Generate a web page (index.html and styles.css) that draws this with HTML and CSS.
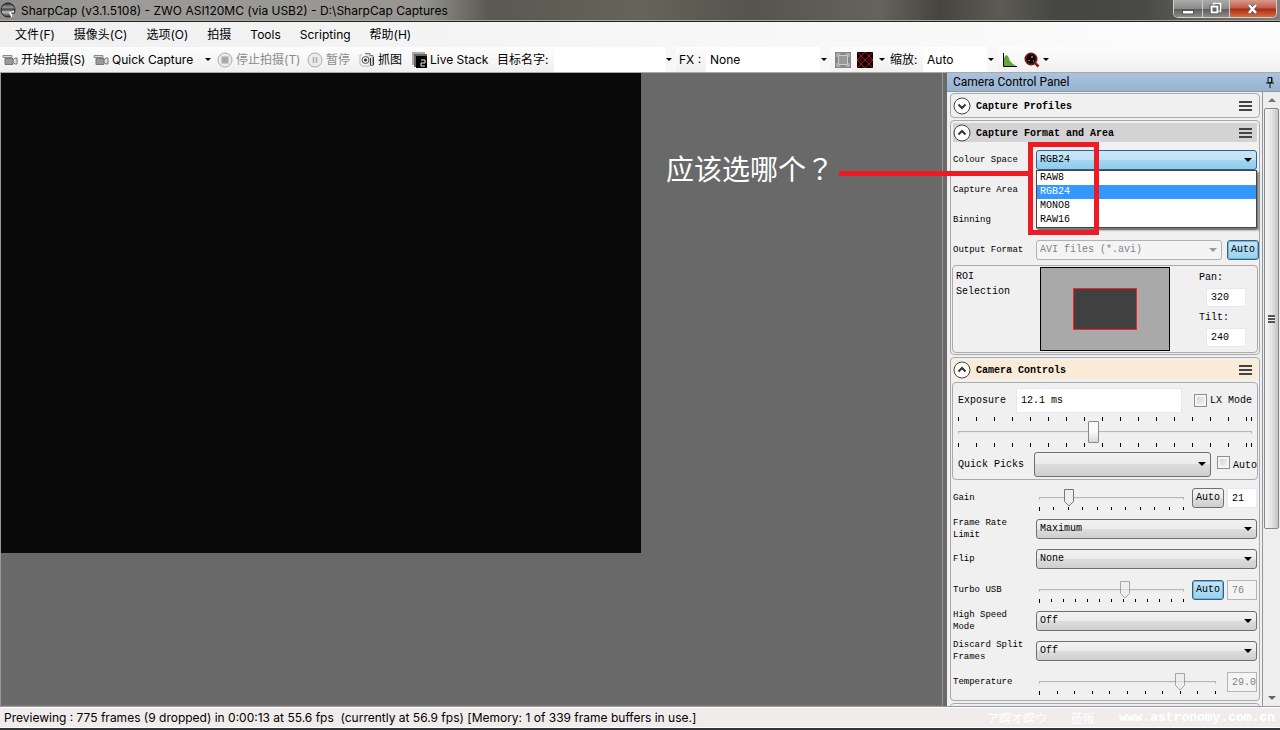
FILE: index.html
```html
<!DOCTYPE html>
<html lang="zh-CN">
<head>
<meta charset="utf-8">
<title>SharpCap</title>
<link rel="stylesheet" href="styles.css">
</head>
<body>
<div class="window">
  <header class="titlebar">
    <svg class="app-icon" width="16" height="16" viewBox="0 0 16 16"><defs><linearGradient id="ball" x1="0" y1="0" x2="0" y2="1"><stop offset="0" stop-color="#222"/><stop offset=".3" stop-color="#999"/><stop offset=".45" stop-color="#444"/><stop offset=".65" stop-color="#bbb"/><stop offset="1" stop-color="#333"/></linearGradient></defs><circle cx="8" cy="8" r="7" fill="url(#ball)" stroke="#222"/><path d="M9 10l5-1v6h-3z" fill="#fff"/><path d="M11 11h3M13 11v4" stroke="#333"/></svg>
    <h1 class="title">SharpCap (v3.1.5108) - ZWO ASI120MC (via USB2) - D:\SharpCap Captures</h1>
    <div class="caption">
      <button class="cap min" aria-label="Minimize"><svg width="12" height="14" viewBox="0 0 12 14"><rect x=".5" y="8.500" width="11" height="3.500" fill="#fff" stroke="#555"/></svg></button>
      <button class="cap max" aria-label="Restore"><svg width="14" height="14" viewBox="0 0 14 14"><path d="M4.500 1.500h7v8h-7z" fill="#777" stroke="#fff" stroke-width="1.500"/><path d="M2.500 4.500h6v6h-6z" fill="#666" stroke="#fff" stroke-width="2"/><path d="M1 3h9v9h-9z" fill="none" stroke="#445" stroke-width=".6"/></svg></button>
      <button class="cap close" aria-label="Close"><svg width="14" height="14" viewBox="0 0 14 14"><path d="M3 3l7 8M10 3l-7 8" stroke="#556" stroke-width="4"/><path d="M3 3l7 8M10 3l-7 8" stroke="#fff" stroke-width="2.500"/></svg></button>
    </div>
  </header>
  <nav class="menu">
    <button>文件(F)</button><button>摄像头(C)</button><button>选项(O)</button><button>拍摄</button><button>Tools</button><button>Scripting</button><button>帮助(H)</button>
  </nav>
  <div class="toolbar">
    <button class="tool w91"><svg width="16" height="16" viewBox="0 0 16 16"><path d="M1 3.500h9v2H1z" fill="#ddd" stroke="#888"/><path d="M3 6.500h8v6H3z" fill="#999" stroke="#777"/><path d="M11 8l2-2h2v6h-2l-2-2z" fill="#ddd" stroke="#777"/></svg>开始拍摄(S)</button>
    <button class="tool w124"><svg width="16" height="16" viewBox="0 0 16 16"><path d="M1 3.500h9v2H1z" fill="#ddd" stroke="#888"/><path d="M3 6.500h8v6H3z" fill="#999" stroke="#777"/><path d="M11 8l2-2h2v6h-2l-2-2z" fill="#ddd" stroke="#777"/></svg>Quick Capture<i class="arrow end"></i></button>
    <button class="tool w90" disabled><svg width="16" height="16" viewBox="0 0 16 16"><circle cx="8" cy="8" r="7" fill="#ececec" stroke="#aaa"/><path d="M4.500 4.500h7v7h-7z" fill="#aaa"/></svg>停止拍摄(T)</button>
    <button class="tool w52" disabled><svg width="16" height="16" viewBox="0 0 16 16"><circle cx="8" cy="8" r="7" fill="#ececec" stroke="#aaa"/><path d="M6.500 5v6M9.500 5v6" stroke="#aaa" stroke-width="1.500"/></svg>暂停</button>
    <button class="tool w53"><svg width="16" height="16" viewBox="0 0 16 16"><path d="M1 3h2M1 3v9l2 2h8" fill="none" stroke="#bbb"/><path d="M6 1.500h5v2h3v10h-3" fill="#ddd" stroke="#777"/><circle cx="6.500" cy="8" r="3.500" fill="#eee" stroke="#555"/><circle cx="6.500" cy="8" r="1.500" fill="#333"/><path d="M11.500 6v7M14.500 5v8" stroke="#333"/></svg>抓图</button>
    <button class="tool w85 stack"><svg width="16" height="16" viewBox="0 0 16 16"><path d="M0 0h13v13H0z" fill="#aaa"/><path d="M2 2h13v13H2z" fill="#666"/><path d="M4 4h11v12H4z" fill="#000"/><path d="M9 8h4v3h-4v3h4" fill="none" stroke="#eee"/></svg>Live Stack</button>
    <label class="lab w57" for="target">目标名字:</label>
    <select id="target" class="flat w122"><option></option></select>
    <label class="lab w27" for="fx">FX :</label>
    <select id="fx" class="flat w125"><option>None</option></select>
    <button class="tool w22" aria-label="Selection area"><svg width="16" height="16" viewBox="0 0 16 16"><path d="M0 0h16v16H0z" fill="#888"/><path d="M3.500 3.500h9v9h-9z" fill="#999" stroke="#ccc"/><path d="M2 5V2h3M11 2h3v3M14 11v3h-3M5 14H2v-3" stroke="#ccc" fill="none"/></svg></button>
    <button class="tool w33" aria-label="Reticule"><svg width="16" height="16" viewBox="0 0 16 16"><path d="M0 0h16v16H0z"/><path d="M0 0l16 16M16 0L0 16M8 0l8 8-8 8-8-8zM0 8h5M11 8h5" stroke="#c00" fill="none"/></svg><i class="arrow"></i></button>
    <label class="lab w33" for="zoom">缩放:</label>
    <select id="zoom" class="flat w75"><option>Auto</option></select>
    <button class="tool w22" aria-label="Histogram"><svg width="16" height="16" viewBox="0 0 16 16"><path d="M1 14V7l3-4 2 1 2 5 3 3 3 2z" fill="#64a63c"/><path d="M1.500 1v13.500H15" fill="none" stroke="#000"/></svg></button>
    <button class="tool w33 focus" aria-label="Focus"><svg width="16" height="16" viewBox="0 0 16 16"><circle cx="7" cy="7" r="5.500" fill="#000" stroke="#701414" stroke-width="2"/><path d="M10.500 10.500l4 4" stroke="#8b1a1a" stroke-width="2.500"/><path d="M8 4v2M5 8v1M9 9h1" stroke="#ddd"/></svg><i class="arrow"></i></button>
  </div>

  <main class="work">
    <section class="viewport" aria-label="Preview"><div class="frame"></div></section>
    <aside class="panel">
      <header class="panel-head"><h2>Camera Control Panel</h2><svg width="10" height="12" viewBox="0 0 10 12"><path d="M3 1.500h4v5H3zM1 7h8M5 7v5" fill="none" stroke="#111"/><path d="M6.500 1v6" stroke="#111"/></svg></header>
      <div class="panel-body">
        <div class="groups">
          <section class="group">
            <div class="ghead"><svg width="18" height="18" viewBox="0 0 18 18"><circle cx="9" cy="9" r="8" fill="#fff" stroke="#444"/><path d="M5.500 7.500L9 11l3.500-3.500" fill="none" stroke="#333" stroke-width="2"/></svg><h3>Capture Profiles</h3><button class="burger" aria-label="Menu"></button></div>
          </section>
          <section class="group format">
            <div class="ghead gray"><svg width="18" height="18" viewBox="0 0 18 18"><circle cx="9" cy="9" r="8" fill="#fff" stroke="#444"/><path d="M5.500 10.500L9 7l3.500 3.500" fill="none" stroke="#333" stroke-width="2"/></svg><h3>Capture Format and Area</h3><button class="burger" aria-label="Menu"></button></div>
            <div class="row"><label for="space">Colour Space</label>
              <div class="combo"><select id="space" class="open"><option>RGB24</option></select>
                <ul class="list" role="listbox"><li role="option">RAW8</li><li role="option" class="sel" aria-selected="true">RGB24</li><li role="option">MONO8</li><li role="option">RAW16</li></ul></div></div>
            <div class="row"><label for="area">Capture Area</label><select id="area"><option></option></select></div>
            <div class="row"><label for="bin">Binning</label><select id="bin"><option></option></select></div>
            <div class="row fmt"><label for="fmt">Output Format</label><select id="fmt" disabled><option>AVI files (*.avi)</option></select><button class="auto on">Auto</button></div>
            <div class="box roi">
              <span class="roi-label">ROI<br>Selection</span>
              <div class="roi-map"><div class="roi-area"></div></div>
              <div class="roi-vals"><label for="pan">Pan:</label><input id="pan" value="320"><label for="tilt">Tilt:</label><input id="tilt" value="240"></div>
            </div>
          </section>
          <section class="group">
            <div class="ghead cream"><svg width="18" height="18" viewBox="0 0 18 18"><circle cx="9" cy="9" r="8" fill="#fff" stroke="#444"/><path d="M5.500 10.500L9 7l3.500 3.500" fill="none" stroke="#333" stroke-width="2"/></svg><h3>Camera Controls</h3><button class="burger" aria-label="Menu"></button></div>
            <div class="box expo">
              <div class="erow"><label for="exp">Exposure</label><input id="exp" value="12.1 ms"><label class="check"><input type="checkbox">LX Mode</label></div>
              <div class="eslide"><div class="eticks"></div><input type="range" class="square" min="0" max="100" value="46" aria-label="Exposure"><div class="eticks"></div></div>
              <div class="qrow"><label for="quick">Quick Picks</label><select id="quick"><option></option></select><label class="check qa"><input type="checkbox"><span>Auto</span></label></div>
            </div>
            <div class="row slide"><label for="gain">Gain</label><div class="slider"><input id="gain" type="range" value="18"><div class="ticks"><i></i><i></i><i></i><i></i><i></i><i></i><i></i><i></i><i></i><i></i><i></i></div></div><button class="auto">Auto</button><input class="num" value="21" aria-label="Gain value"></div>
            <div class="row"><label for="rate">Frame Rate Limit</label><select id="rate"><option>Maximum</option></select></div>
            <div class="row"><label for="flip">Flip</label><select id="flip"><option>None</option></select></div>
            <div class="row slide"><label for="turbo">Turbo USB</label><div class="slider"><input id="turbo" type="range" value="60" disabled><div class="ticks"><i></i><i></i><i></i><i></i><i></i><i></i><i></i><i></i><i></i><i></i><i></i><i></i><i></i></div></div><button class="auto on">Auto</button><input class="num" value="76" disabled aria-label="Turbo value"></div>
            <div class="row"><label for="hs">High Speed Mode</label><select id="hs"><option>Off</option></select></div>
            <div class="row"><label for="ds">Discard Split Frames</label><select id="ds"><option>Off</option></select></div>
            <div class="row slide"><label for="temp">Temperature</label><div class="slider"><input id="temp" type="range" value="82" disabled><div class="ticks"><i></i><i></i><i></i><i></i><i></i><i></i><i></i><i></i><i></i><i></i><i></i></div></div><input class="num" value="29.0" disabled aria-label="Temperature value"></div>
          </section>
          <section class="group last">
            <div class="ghead blue"><svg width="18" height="18" viewBox="0 0 18 18"><circle cx="9" cy="9" r="8" fill="#fff" stroke="#444"/></svg></div>
          </section>
        </div>
        <div class="scroll"><i class="arrow up"></i><div class="thumb"><span></span></div><i class="arrow"></i></div>
      </div>
    </aside>
    <div class="note"><span lang="zh-TW">应该选哪个？</span><div class="line"></div><div class="mark"></div></div>
  </main>
  <footer class="status"><span>Previewing : 775 frames (9 dropped) in 0:00:13 at 55.6 fps&nbsp; (currently at 56.9 fps) [Memory: 1 of 339 frame buffers in use.]</span><span class="wm"><span>ア螟オ螟ウ</span><span>莅阪</span><b>www.astronomy.com.cn</b></span></footer>
</div>
</body>
</html>
```
FILE: styles.css
```css
* { box-sizing: border-box; }
body { margin: 0; font: 12px/16px Inter, "Noto Sans CJK SC", sans-serif; color: #000; overflow: hidden; }
h1, h2, h3, ul { margin: 0; padding: 0; font-size: inherit; font-weight: normal; }
button, input, select { font: inherit; color: inherit; margin: 0; padding: 0; border: 0; background: none; border-radius: 0; appearance: none; outline: 0; }
svg { display: block; flex: none; }
.window { height: 100vh; display: flex; flex-direction: column; background: #6a6a6a; }

/* Title bar */
.titlebar { flex: none; height: 22px; display: flex; align-items: flex-start; border-bottom: 1px solid #222; box-shadow: inset 0 -1px #aaa7a2;
  background: linear-gradient(90deg, #8e8d8a 0, #9c9b98 120px, #96958f 420px, #5a5850 490px, #66635a 640px, #56544c 750px, #65635b 880px, #45443f 940px, #5b5a53 1000px, #454541 1060px, #484844 1140px, #807f7b 100%); }
.app-icon { margin: 2px 5px 0 0; }
.title { flex: 1; line-height: 21px; white-space: nowrap; }
.caption { display: flex; height: 18px; margin-right: 3px; border: 1px solid #d2cfcc; border-top: 0; border-radius: 0 0 5px 5px; overflow: hidden; }
.cap { height: 17px; display: flex; justify-content: center; align-items: center; background: linear-gradient(#aaa 0, #8b8b8a 50%, #5b5b59 52%, #8d8c89); border-right: 1px solid #ccc; }
.min { width: 29px; }
.max { width: 27px; }
.close { width: 46px; border: 0; background: linear-gradient(#d59a8d 0, #c45a46 48%, #a92a13 52%, #d56d43); }

/* Menu and toolbar */
.menu { flex: none; height: 25px; display: flex; align-items: center; gap: 19px; padding-left: 15px; background: linear-gradient(90deg, #f0f0f0, #fcfcfc); }
.toolbar { flex: none; height: 25px; display: flex; align-items: center; padding-left: 2px; white-space: nowrap; background: linear-gradient(#fdfdfd, #f0f0f0); }
.tool { display: flex; align-items: center; gap: 3px; flex: none; height: 24px; }
.tool:disabled { color: #8b8b8b; }
.stack { gap: 2px; }
.end { margin-left: auto; margin-right: 6px; }
.lab { flex: none; }
.arrow { display: block; width: 0; height: 0; border: 3px solid transparent; border-top-color: #000; border-bottom: 0; }
.tool .arrow:not(.end) { margin-left: 3px; }
.focus { gap: 0; }
.flat { flex: none; height: 25px; padding-left: 4px; background: url("data:image/svg+xml,%3Csvg xmlns='http://www.w3.org/2000/svg' width='6' height='3'%3E%3Cpath d='M0 0h6L3 3z'/%3E%3C/svg%3E") right 4px top 11px no-repeat, linear-gradient(90deg, transparent calc(100% - 11px), #f7f7f7 0), #fff; }
.w22 { width: 22px; }
.w27 { width: 27px; }
.w33 { width: 33px; }
.w52 { width: 52px; }
.w53 { width: 53px; }
.w57 { width: 57px; }
.w75 { width: 75px; margin-right: 4px; }
.w85 { width: 85px; }
.w90 { width: 90px; }
.w91 { width: 91px; }
.w122 { width: 122px; margin-right: 3px; }
.w124 { width: 124px; }
.w125 { width: 125px; margin-right: 4px; }

/* Work area */
.work { flex: 1; min-height: 0; display: flex; position: relative; border-top: 1px solid #a9a9a9; }
.viewport { flex: 1; border-left: 1px solid #999; border-right: 1px solid #999; border-bottom: 1px solid #777; background: #696969; }
.frame { width: 640px; height: 480px; background: #0a0a0a; }
.panel { flex: none; width: 337px; border-left: 4px solid #6a6a6a; display: flex; flex-direction: column; background: #f0f0f0; }
.panel-head { flex: none; height: 18px; display: flex; align-items: center; justify-content: space-between; padding: 0 5px 0 6px; background: linear-gradient(#a9c3df, #98b3d0); }
.panel-head h2 { font-family: Roboto, sans-serif; }
.panel-body { flex: 1; min-height: 0; display: flex; font: 10px/12px "Liberation Mono", monospace; border-top: 1px solid #8d96a3; }
.groups { flex: 1; min-width: 0; overflow: hidden; padding: 1px 2px 0 3px; border-right: 1px solid #8d96a3; display: flex; flex-direction: column; gap: 2px; }
.group { flex: none; border: 1px solid #aaa; border-radius: 4px; padding: 2px; }
.format { padding-bottom: 1px; }
.last { padding: 1px; }
.ghead { height: 19px; display: flex; align-items: center; gap: 5px; }
.ghead + .row { margin-top: 3px; }
.ghead h3 { flex: 1; font-weight: bold; padding-top: 2px; }
.gray { background: #d3d3d3; }
.cream { background: #faebd7; }
.blue { background: #e6f0fa; }
.burger { width: 13px; height: 10px; margin-right: 5px; border-top: 2px solid #444; border-bottom: 2px solid #444; background: linear-gradient(#444, #444) 0 50% / 100% 2px no-repeat; }

.row { height: 30px; display: grid; grid-template-columns: 83px 1fr; align-items: center; }
.row > label { font-size: 9px; padding-right: 4px; }
.fmt { grid-template-columns: 83px 1fr 32px; margin-right: -2px; }
.fmt select { margin-right: 5px; }
.slide { height: 32px; grid-template-columns: 83px 1fr auto auto; }
.panel select { width: 100%; height: 20px; padding-left: 3px; border: 1px solid #707070; border-radius: 3px;
  background: url("data:image/svg+xml,%3Csvg xmlns='http://www.w3.org/2000/svg' width='8' height='4'%3E%3Cpath d='M0 0h8L4 4z'/%3E%3C/svg%3E") right 4px center no-repeat, linear-gradient(#f2f2f2, #ebebeb 50%, #ddd 50%, #cfcfcf); }
.panel select:disabled { width: auto; color: #838383; opacity: 1; border-color: #adb2b5; background: url("data:image/svg+xml,%3Csvg xmlns='http://www.w3.org/2000/svg' width='8' height='4'%3E%3Cpath fill='%23999' d='M0 0h8L4 4z'/%3E%3C/svg%3E") right 4px center no-repeat, #f4f4f4; }
.panel .open { border-color: #2c628b; background: url("data:image/svg+xml,%3Csvg xmlns='http://www.w3.org/2000/svg' width='8' height='4'%3E%3Cpath d='M0 0h8L4 4z'/%3E%3C/svg%3E") right 4px center no-repeat, linear-gradient(#c9e6f7, #bfe2f6 50%, #a3d6f0 50%, #8fcbea); }
.combo { position: relative; }
.combo select { display: block; }
.list { position: absolute; z-index: 2; left: 0; right: 0; top: 20px; list-style: none; background: #fff; border: 1px solid #444; box-shadow: 2px 2px 2px #777; }
.list li { height: 14px; line-height: 14px; padding-left: 3px; }
.list .sel { background: #3399ff; color: #fff; }
.auto { width: 32px; height: 20px; border: 1px solid #707070; border-radius: 3px; background: linear-gradient(#f2f2f2, #ebebeb 50%, #ddd 50%, #cfcfcf); }
.auto.on { border-color: #2c628b; box-shadow: inset 0 0 0 1px #7fb0cf; background: linear-gradient(#c4e5f6, #98d1ef); }
.box { margin: 0 -1px; border: 1px solid #aaa; border-radius: 4px; }
.roi { height: 88px; display: flex; padding: 1px 11px 1px 3px; }
.roi-label { flex: none; width: 84px; line-height: 15px; padding-top: 2px; }
.roi-map { flex: none; width: 130px; height: 84px; display: grid; place-content: center; background: #a9a9a9; border: 1px solid #000; }
.roi-area { width: 64px; height: 42px; background: #404040; border: 1px solid #ff2020; }
.roi-vals { margin-left: auto; width: 47px; padding-top: 1px; display: flex; flex-direction: column; align-items: flex-start; }
.roi-vals label { line-height: 20px; }
.roi-vals input { width: 40px; height: 19px; margin-left: 7px; margin-bottom: 1px; }
.panel input:not([type]) { background: #fff; border: 1px solid #e3e9ef; padding-left: 4px; }
.expo { height: 98px; padding: 5px 5px 0; margin-top: 3px; margin-bottom: 2px; }
.erow { display: flex; align-items: center; height: 25px; }
.erow > label:first-child { width: 58px; }
.erow #exp { width: 166px; height: 25px; }
.check { display: flex; align-items: center; gap: 3px; margin-left: auto; }
.check input { width: 13px; height: 13px; border: 1px solid #8e8f8f; background: linear-gradient(135deg, #cbd0d6, #f7f7f7); box-shadow: inset 0 0 0 2px #f4f4f4; }
.eslide { display: flex; flex-direction: column; padding-top: 4px; }
.eticks { height: 4px; border-right: 1px solid #000; background: repeating-linear-gradient(90deg, #000 0 1px, transparent 1px 18px); }
input[type=range] { display: block; width: 100%; height: 22px; }
input[type=range]::-webkit-slider-runnable-track { height: 3px; border: 1px solid #b5b5b5; border-bottom-color: #eee; background: #e7eaea; }
input[type=range]::-webkit-slider-thumb { appearance: none; width: 10px; height: 18px; margin-top: -9px;
  background: url("data:image/svg+xml,%3Csvg xmlns='http://www.w3.org/2000/svg' width='10' height='18'%3E%3Cpath d='M.5.5h9v12l-4.500 4.500L.5 12.500z' fill='%23eee' stroke='%23777'/%3E%3C/svg%3E"); }
input[type=range]:disabled::-webkit-slider-thumb { opacity: .6; }
input.square[type=range]::-webkit-slider-thumb { width: 11px; height: 22px; margin-top: -11px; border: 1px solid #888; border-radius: 1px; background: linear-gradient(#fafafa 50%, #d8d8d8); }
.qrow { display: flex; align-items: center; height: 26px; margin-top: 4px; }
.qrow > label:first-child { width: 76px; flex: none; padding-top: 2px; }
.panel #quick { width: 177px; height: 25px; }
.check.qa { margin-right: -5px; flex: none; align-items: flex-start; }
.qa span { padding-top: 4px; }
.slider { padding: 4px 8px 0 3px; }
.slider input { height: 18px; }
.ticks { display: flex; justify-content: space-between; }
.ticks i { width: 1px; height: 3px; background: #000; }
.ticks i:first-child { height: 4px; }
.panel .num { width: 30px; height: 20px; margin-left: 3px; }
.panel .num:disabled { color: #838383; background: #f4f4f4; border-color: #b5b5b5; }
.scroll { flex: none; width: 17px; display: flex; flex-direction: column; align-items: center; padding: 6px 0 6px; background: #eee; }
.scroll .arrow { border-width: 4px; border-bottom: 0; border-top-color: #666; margin-top: auto; }
.scroll .arrow.up { border: 4px solid transparent; border-top: 0; border-bottom-color: #777; margin: 0 0 6px; }
.thumb { width: 15px; height: 70%; border: 1px solid #888; border-radius: 2px; background: linear-gradient(90deg, #f6f6f6, #e5e5e5 50%, #c4c4c8); display: flex; align-items: center; justify-content: center; }
.thumb span { width: 7px; height: 8px; background: repeating-linear-gradient(#555 0 2px, #eee 2px 3px); }

/* Annotation drawn over the preview and the panel */
.note { position: absolute; z-index: 3; right: 181px; top: 69px; display: flex; height: 93px; align-items: flex-start; pointer-events: none; }
.note span { font: 28px/52px "Noto Sans CJK TC", sans-serif; color: #fff; white-space: nowrap; padding-right: 5px; }
.line { width: 189px; height: 5px; margin-top: 29px; background: #ed1c24; }
.mark { width: 71px; height: 93px; border: 5px solid #ed1c24; }

.status { flex: none; height: 24px; display: flex; justify-content: space-between; align-items: center; padding: 0 5px 0 4px; background: #f0eceb; border-top: 1px solid #999; border-bottom: 2px solid #31363b; box-shadow: inset 0 1px #fff, inset 0 -1px #fff; white-space: pre; }
.wm { display: flex; align-items: center; color: #fff; font: 12px/16px "Noto Sans CJK JP", sans-serif; }
.wm span { margin-right: 24px; }
.wm b { font: bold 13px "Liberation Mono", monospace; }
```
